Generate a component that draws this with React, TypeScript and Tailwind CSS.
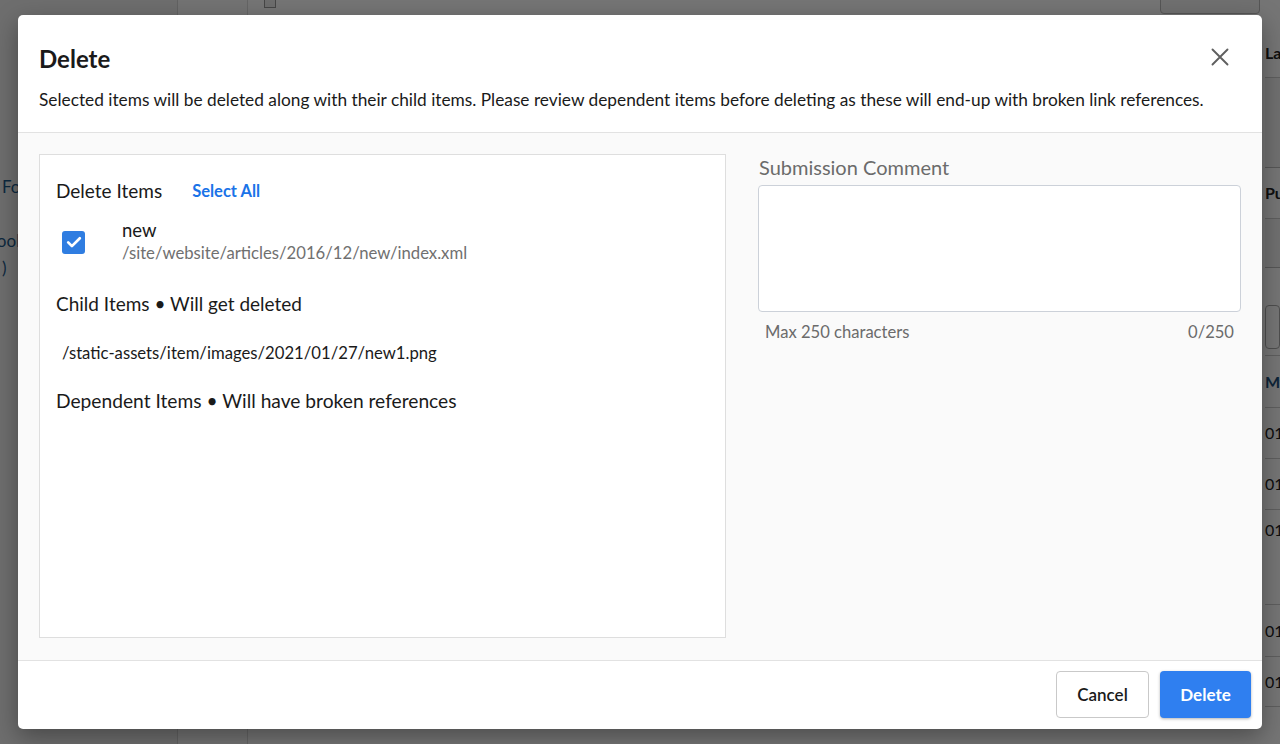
import React, { useState } from 'react';

const font = "font-['Lato','Liberation_Sans',sans-serif]";

// Blurred page behind the modal (only its edges show)
const BackgroundApp = (): JSX.Element => (
  <div className="flex h-full w-full bg-white">
    <div className="flex w-[178px] flex-col border-r border-[#d6d6d6] bg-[#f0f0f0] pt-[174px] text-[17px] text-[#1e5a8a]">
      <div className="pl-[2px]">Folders</div>
      <div className="mt-[28px] -ml-[14px]">Books</div>
      <div className="mt-[2px] pl-[2px]">)</div>
    </div>
    <div className="w-[70px] border-r border-[#dcdcdc] bg-[#fafafa]" />
    <div className="flex flex-1 flex-col">
      <div className="flex h-[15px] items-start pl-4">
        <div className="mt-[-4px] h-[12px] w-[12px] border border-[#999] bg-[#eee]" />
        <div className="flex-1" />
        <div className="mt-[-10px] mr-[2px] h-[24px] w-[100px] rounded border border-[#bbb] bg-[#f5f5f5]" />
      </div>
    </div>
    <div className="flex w-[18px] flex-col overflow-hidden whitespace-nowrap pl-[3px] text-[16px] text-[#222]">
      <div className="flex h-[78px] items-end border-b border-[#ccc] pb-[12px] font-bold">Label</div>
      <div className="h-[90px] border-b border-[#bbb] bg-[#f3f3f3]" />
      <div className="flex h-[51px] items-center border-b border-[#ccc] font-bold">Publish</div>
      <div className="h-[49px] border-b border-[#bbb] bg-[#f3f3f3]" />
      <div className="flex h-[88px] items-end border-b border-[#ccc] pb-[6px]">
        <div className="h-[44px] w-[30px] rounded border border-[#aaa] bg-white" />
      </div>
      <div className="flex h-[52px] items-center border-b border-[#ccc] font-bold text-[#1e4f7a]">My</div>
      <div className="flex h-[51px] items-center border-b border-[#ccc]">01</div>
      <div className="flex h-[51px] items-center border-b border-[#ccc]">01</div>
      <div className="flex h-[95px] items-start border-b border-[#ccc] pt-[8px]">01</div>
      <div className="flex h-[52px] items-center border-b border-[#ccc]">01</div>
      <div className="flex h-[50px] items-center border-b border-[#ccc]">01</div>
    </div>
  </div>
);

const CheckIcon = (): JSX.Element => (
  <svg viewBox="0 0 24 24" className="h-[20px] w-[20px]" fill="none" stroke="white" strokeWidth="3.2" strokeLinecap="round" strokeLinejoin="round">
    <path d="M5 12.5l4.5 4.5L19 7.5" />
  </svg>
);

const CloseIcon = (): JSX.Element => (
  <svg viewBox="0 0 24 24" className="h-[24px] w-[24px]" fill="none" stroke="#5f5f5f" strokeWidth="1.9" strokeLinecap="round">
    <path d="M4.5 4.5l15 15M19.5 4.5l-15 15" />
  </svg>
);

export default function App(): JSX.Element {
  const [checked, setChecked] = useState(true);
  const [comment, setComment] = useState('');

  return (
    <div className={`relative h-[744px] w-[1280px] overflow-hidden ${font}`}>
      <BackgroundApp />

      {/* overlay + dialog */}
      <div className="absolute inset-0 flex items-center justify-center bg-black/[0.54]">
        <div className="flex h-[714px] w-[1244px] flex-col overflow-hidden rounded-[5px] bg-white shadow-[0_8px_24px_rgba(0,0,0,0.35)]">
          {/* header */}
          <div className="relative border-b border-[#e2e2e2] px-[21px] pt-[28px] pb-[20px]">
            <h1 className="text-[24px] font-bold leading-[32px] text-[#1a1a1a]">Delete</h1>
            <p className="mt-[13px] text-[17.3px] leading-[24px] text-[#1a1a1a]">
              Selected items will be deleted along with their child items. Please review dependent items before deleting as these will end-up with broken link references.
            </p>
            <button className="absolute right-[30px] top-[30px] flex h-[24px] w-[24px] items-center justify-center">
              <CloseIcon />
            </button>
          </div>

          {/* body */}
          <div className="flex flex-1 gap-[32px] bg-[#fafafa] px-[21px] pt-[21px] pb-[22px]">
            <div className="flex w-[687px] flex-col border border-[#dedede] bg-white px-[16px] pt-[24px]">
              <div className="flex items-center">
                <span className="text-[19px] leading-[24px] text-[#1a1a1a]">Delete Items</span>
                <button className="ml-[30px] text-[16.5px] font-bold leading-[24px] text-[#1a73e8]">Select All</button>
              </div>
              <div className="mt-[16px] flex items-center">
                <button
                  onClick={() => setChecked(!checked)}
                  className={`ml-[6px] flex h-[23px] w-[23px] items-center justify-center rounded-[3px] ${checked ? 'bg-[#2f7de1]' : 'border-2 border-[#777] bg-white'}`}
                >
                  {checked && <CheckIcon />}
                </button>
                <div className="ml-[37px] flex flex-col">
                  <span className="text-[18.5px] leading-[23px] text-[#1a1a1a]">new</span>
                  <span className="text-[16.7px] leading-[23px] text-[#707070]">/site/website/articles/2016/12/new/index.xml</span>
                </div>
              </div>
              <div className="mt-[27px] text-[19px] leading-[24px] text-[#1a1a1a]">Child Items • Will get deleted</div>
              <div className="mt-[25px] pl-[6px] text-[16.7px] leading-[24px] text-[#1a1a1a]">/static-assets/item/images/2021/01/27/new1.png</div>
              <div className="mt-[24px] text-[19.2px] leading-[24px] text-[#1a1a1a]">Dependent Items • Will have broken references</div>
            </div>

            <div className="flex flex-1 flex-col">
              <label className="pl-[1px] text-[20px] leading-[26px] text-[#6b6b6b]">Submission Comment</label>
              <textarea
                value={comment}
                onChange={(e) => setComment(e.target.value.slice(0, 250))}
                className="mt-[5px] h-[127px] w-full resize-none rounded-[4px] border border-[#ccd1d9] bg-white p-3 text-[16px] outline-none"
              />
              <div className="mt-[8px] flex justify-between px-[7px] text-[16.6px] leading-[24px] text-[#6b6b6b]">
                <span>Max 250 characters</span>
                <span>{comment.length}/250</span>
              </div>
            </div>
          </div>

          {/* footer */}
          <div className="flex h-[69px] items-start justify-end gap-[11px] border-t border-[#e2e2e2] pt-[10px] pr-[11px]">
            <button className="h-[47px] w-[93px] rounded-[4px] border border-[#c9c9c9] bg-white text-[17px] font-semibold text-[#1a1a1a]">
              Cancel
            </button>
            <button className="h-[47px] w-[91px] rounded-[4px] bg-[#2f7ff0] text-[17px] font-bold text-white shadow-[0_1px_3px_rgba(0,0,0,0.3)]">
              Delete
            </button>
          </div>
        </div>
      </div>
    </div>
  );
}
